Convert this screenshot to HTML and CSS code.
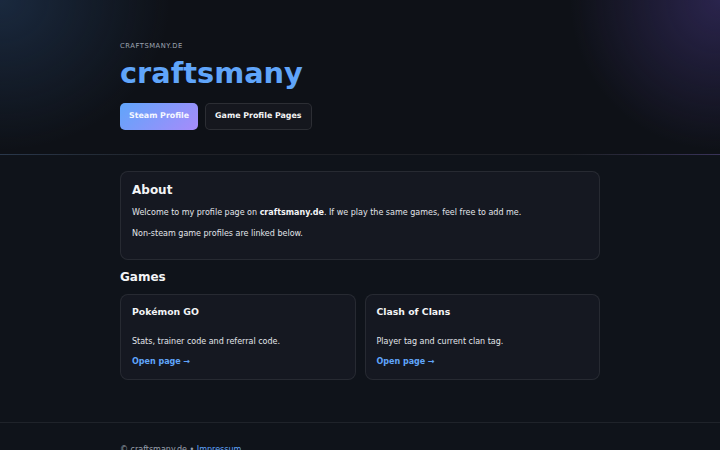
FILE: index.html
```html
<!DOCTYPE html>
<html lang="en">
<head>
<meta charset="utf-8">
<title>craftsmany</title>
<link rel="stylesheet" href="styles.css">
</head>
<body>
<header class="hero">
  <div class="wrap">
    <p class="kicker">CRAFTSMANY.DE</p>
    <h1 class="title">craftsmany</h1>
    <div class="actions">
      <a class="btn btn-primary" href="#">Steam Profile</a>
      <a class="btn btn-ghost" href="#">Game Profile Pages</a>
    </div>
  </div>
</header>
<main class="wrap">
  <section class="card about">
    <h2 class="card-title">About</h2>
    <p class="text">Welcome to my profile page on <strong>craftsmany.de</strong>. If we play the same games, feel free to add me.</p>
    <p class="text">Non-steam game profiles are linked below.</p>
  </section>
  <h2 class="section-title">Games</h2>
  <div class="games">
    <article class="card game">
      <h3 class="game-title">Pokémon GO</h3>
      <p class="text game-desc">Stats, trainer code and referral code.</p>
      <a class="link" href="#">Open page →</a>
    </article>
    <article class="card game">
      <h3 class="game-title">Clash of Clans</h3>
      <p class="text game-desc">Player tag and current clan tag.</p>
      <a class="link" href="#">Open page →</a>
    </article>
  </div>
</main>
<footer class="footer">
  <div class="wrap">
    <p class="foot-text">© craftsmany.de • <a class="foot-link" href="#">Impressum</a></p>
  </div>
</footer>
</body>
</html>
```

FILE: styles.css
```css
* { box-sizing: border-box; }
html, body { margin: 0; padding: 0; }
body {
  background: #0f131a;
  color: #e2e5ea;
  font-family: "DejaVu Sans", "Noto Sans", sans-serif;
  font-size: 8px;
  line-height: 1.6;
}
.wrap { width: 480px; margin: 0 auto; }
.hero {
  background:
    radial-gradient(ellipse 170px 150px at 0 0, rgba(40, 70, 110, 0.45), rgba(40, 70, 110, 0) 100%),
    radial-gradient(ellipse 150px 150px at 720px 0, rgba(70, 55, 130, 0.5), rgba(70, 55, 130, 0) 100%),
    #0e1117;
  border-bottom: 1px solid rgba(255, 255, 255, 0.07);
  padding: 41px 0 24px;
}
.kicker {
  margin: 0;
  font-size: 6.75px;
  letter-spacing: 0.55px;
  color: #9aa1ad;
  line-height: 10px;
}
.title {
  margin: 4px 0 12px;
  font-size: 28.8px;
  line-height: 36px;
  font-weight: 700;
  color: #60a5fa;
}
.actions { display: flex; gap: 7px; }
.btn {
  display: flex;
  align-items: center;
  height: 27px;
  padding: 0 9px;
  border-radius: 5px;
  font-size: 7.9px;
  font-weight: 700;
  color: #f3f4f6;
  text-decoration: none;
}
.btn-primary {
  background: linear-gradient(135deg, #60a5fa, #a78bfa);
  color: #f5f7ff;
}
.btn-ghost {
  background: #15171e;
  border: 1px solid rgba(255, 255, 255, 0.1);
}
main.wrap { padding-top: 16px; padding-bottom: 42px; }
.card {
  background: #151821;
  border: 1px solid rgba(255, 255, 255, 0.08);
  border-radius: 8px;
}
.about { padding: 9px 11px 11px; }
.card-title {
  margin: 0 0 7px;
  font-size: 12px;
  line-height: 18px;
  color: #f3f4f6;
}
.text { margin: 0 0 8px; line-height: 13px; }
.text strong { color: #f3f4f6; }
.section-title {
  margin: 9px 0 9px;
  font-size: 12px;
  line-height: 16px;
  color: #f3f4f6;
}
.games { display: grid; grid-template-columns: 1fr 1fr; gap: 9px; }
.game { padding: 10px 11px 10px; }
.game-title {
  margin: 0 0 16px;
  font-size: 9.3px;
  line-height: 14px;
  color: #f3f4f6;
}
.game-desc { margin-bottom: 7px; }
.link {
  color: #60a5fa;
  font-weight: 700;
  text-decoration: none;
  line-height: 13px;
  display: inline-block;
}
.footer {
  border-top: 1px solid rgba(255, 255, 255, 0.07);
  padding: 20px 0;
}
.foot-text { margin: 0; color: #9aa1ad; line-height: 13px; }
.foot-link { color: #60a5fa; text-decoration: none; }
```
